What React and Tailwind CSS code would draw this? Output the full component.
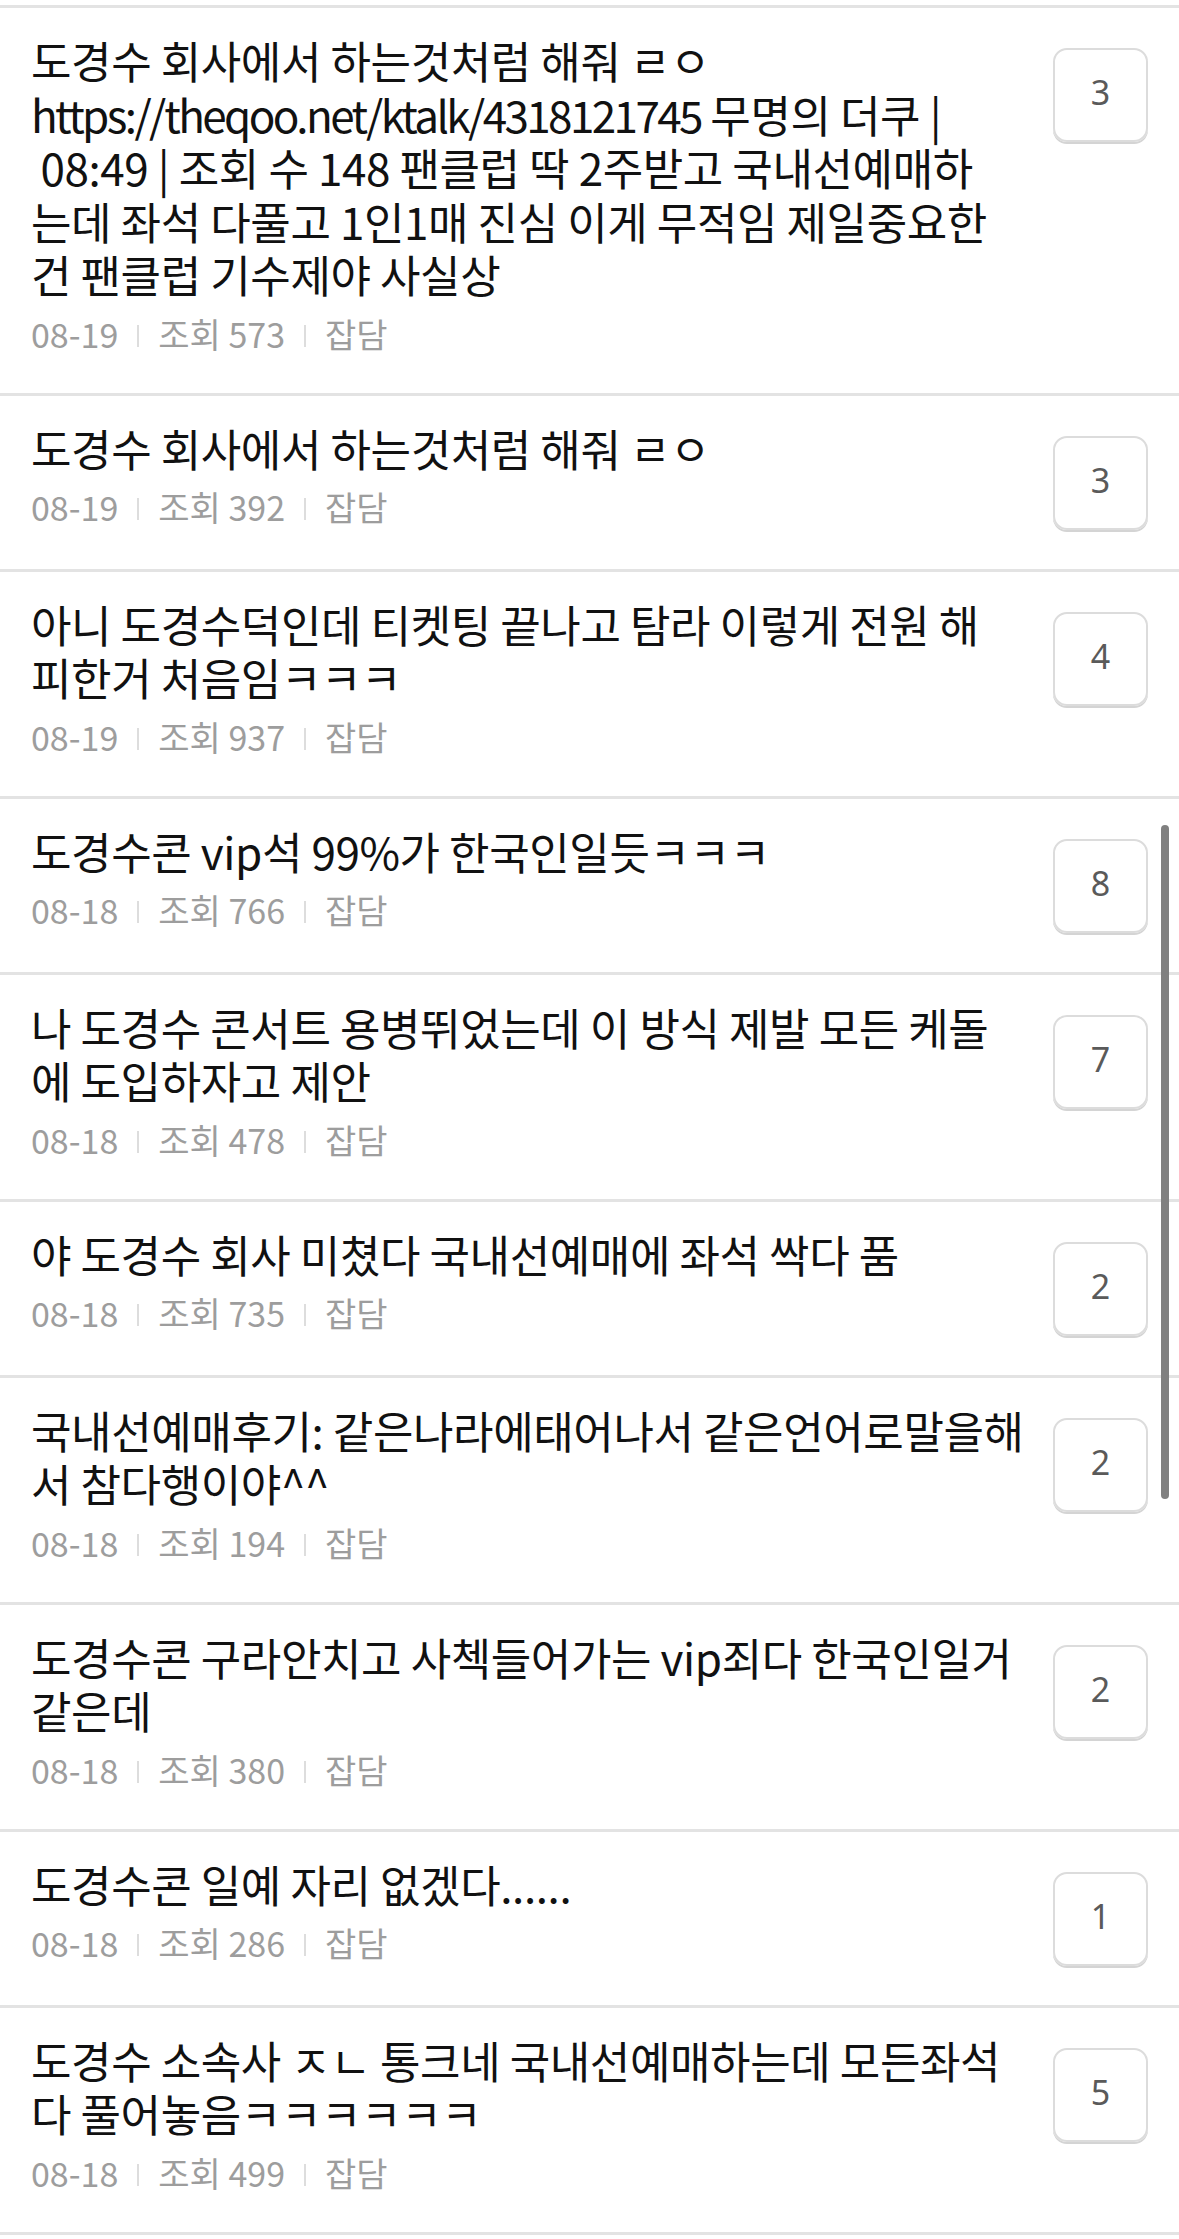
import React from 'react'

const posts = [
  {
    lines: [
      '도경수 회사에서 하는것처럼 해줘 ㄹㅇ',
      <>
        <span className="tracking-[-2.6px]">https://theqoo.net/ktalk/4318121745</span> 무명의 더쿠 |
      </>,
      '\u00a008:49 | 조회 수 148 팬클럽 딱 2주받고 국내선예매하',
      '는데 좌석 다풀고 1인1매 진심 이게 무적임 제일중요한',
      '건 팬클럽 기수제야 사실상',
    ],
    date: '08-19',
    views: 573,
    comments: 3,
  },
  { lines: ['도경수 회사에서 하는것처럼 해줘 ㄹㅇ'], date: '08-19', views: 392, comments: 3 },
  {
    lines: ['아니 도경수덕인데 티켓팅 끝나고 탐라 이렇게 전원 해', '피한거 처음임ㅋㅋㅋ'],
    date: '08-19',
    views: 937,
    comments: 4,
  },
  { lines: ['도경수콘 vip석 99%가 한국인일듯ㅋㅋㅋ'], date: '08-18', views: 766, comments: 8 },
  {
    lines: ['나 도경수 콘서트 용병뛰었는데 이 방식 제발 모든 케돌', '에 도입하자고 제안'],
    date: '08-18',
    views: 478,
    comments: 7,
  },
  { lines: ['야 도경수 회사 미쳤다 국내선예매에 좌석 싹다 품'], date: '08-18', views: 735, comments: 2 },
  {
    lines: ['국내선예매후기: 같은나라에태어나서 같은언어로말을해', '서 참다행이야^^'],
    date: '08-18',
    views: 194,
    comments: 2,
  },
  {
    lines: ['도경수콘 구라안치고 사첵들어가는 vip죄다 한국인일거', '같은데'],
    date: '08-18',
    views: 380,
    comments: 2,
  },
  { lines: ['도경수콘 일예 자리 없겠다......'], date: '08-18', views: 286, comments: 1 },
  {
    lines: ['도경수 소속사 ㅈㄴ 통크네 국내선예매하는데 모든좌석', '다 풀어놓음ㅋㅋㅋㅋㅋㅋ'],
    date: '08-18',
    views: 499,
    comments: 5,
  },
]

const Divider = () => (
  <span className="inline-block w-[2px] h-[22px] bg-[#dddddd] mx-[19px] translate-y-[2px]" />
)

const PostRow = ({ post }) => (
  <div className="flex items-start gap-[12px] pl-[31px] pr-[31px] pt-[26px] pb-[39px] border-b-[3px] border-[#e3e3e3]">
    <div className="flex-1 min-w-0">
      <div className="text-[44px] text-[#111111] tracking-[-0.4px] whitespace-nowrap">
        {post.lines.map((line, i) => (
          <span key={i} className="block h-[53.5px] leading-[53.5px]">
            {line}
          </span>
        ))}
      </div>
      {/* meta line */}
      <div className="mt-[12px] flex items-center h-[40px] text-[34px] leading-[40px] text-[#9d9d9d]">
        <span>{post.date}</span>
        <Divider />
        <span>조회 {post.views}</span>
        <Divider />
        <span>잡담</span>
      </div>
    </div>
    <div className="mt-[14px] w-[95px] h-[94px] shrink-0 rounded-[14px] border-2 border-[#dcdcdc] shadow-[0_2px_0_#d4d4d4] flex items-center justify-center pb-[5px] text-[34px] text-[#5a5a5a] font-['Noto_Sans',sans-serif]">
      {post.comments}
    </div>
  </div>
)

export default function App() {
  return (
    <div className="relative w-[1179px] h-[2239px] overflow-hidden bg-white pt-[5px] font-['Noto_Sans_CJK_KR','Noto_Sans',sans-serif]">
      <div className="border-t-[3px] border-[#e3e3e3]">
        {posts.map((post, i) => (
          <PostRow key={i} post={post} />
        ))}
      </div>

      {/* scrollbar overlay */}
      <div className="absolute right-[10px] top-[825px] w-[8px] h-[674px] rounded-full bg-[#808080]" />
    </div>
  )
}
